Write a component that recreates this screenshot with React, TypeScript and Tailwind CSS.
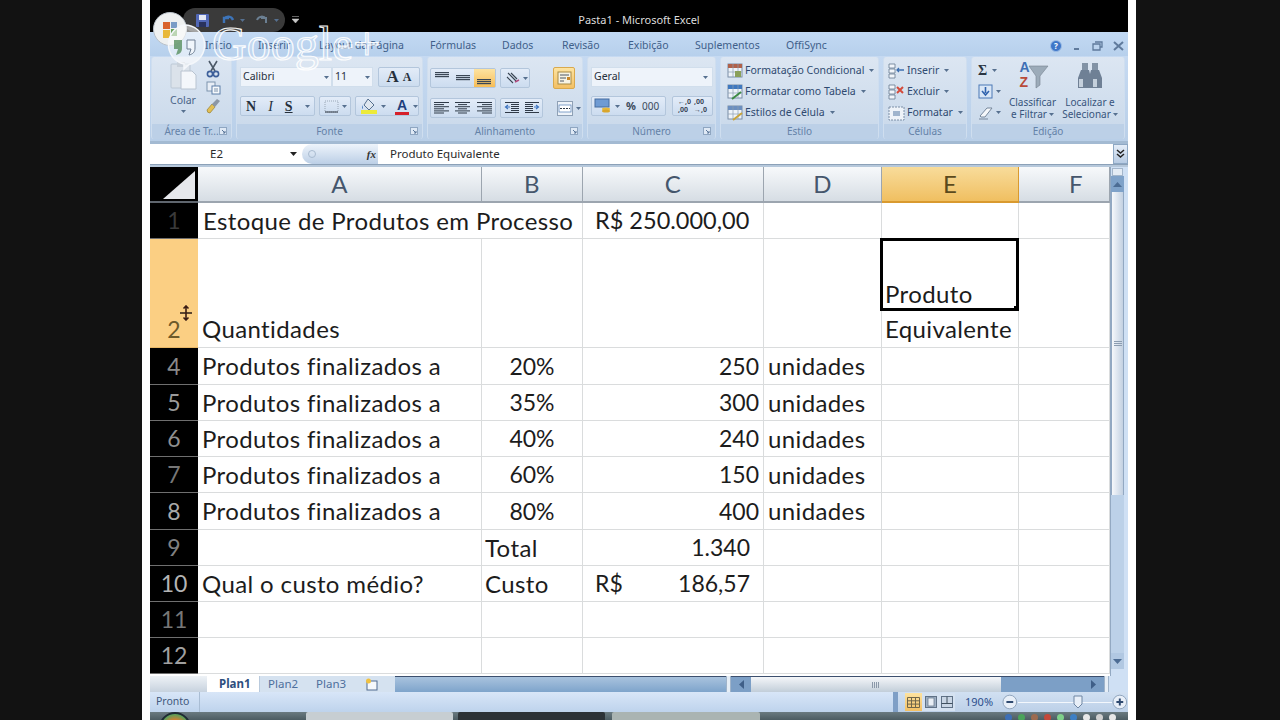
import type { ReactNode } from "react";

const ui = "font-['Noto_Sans',sans-serif]";
const cellFont = "font-['Lato',sans-serif]";

const tabs: [string, string][] = [
  ["Início", "w-[53px]"],
  ["Inserir", "w-[61px]"],
  ["Layout da Página", "w-[111px]"],
  ["Fórmulas", "w-[72px]"],
  ["Dados", "w-[60px]"],
  ["Revisão", "w-[66px]"],
  ["Exibição", "w-[67px]"],
  ["Suplementos", "w-[91px]"],
  ["OffiSync", "w-[60px]"],
];

function Caret({ className = "" }: { className?: string }) {
  return (
    <svg width="5" height="3" viewBox="0 0 5 3" className={className}>
      <path d="M0 0h5L2.5 3z" fill="#56708f" />
    </svg>
  );
}

function Launcher() {
  return (
    <svg width="8" height="8" viewBox="0 0 8 8" className="absolute right-[4px] top-[3px]">
      <rect x="0.5" y="0.5" width="7" height="7" fill="#dfe9f5" stroke="#8fa6c1" />
      <path d="M3 3l3 3M6 4v2H4" stroke="#5a7699" fill="none" />
    </svg>
  );
}

function Group({ w, label, launcher, children }: { w: string; label: string; launcher?: boolean; children: ReactNode }) {
  return (
    <div className={`${w} h-[82px] flex flex-col rounded-[3px] overflow-hidden bg-gradient-to-b from-[#dce6f2] to-[#c8d8ea] border-x border-[#cfdeef]`}>
      <div className="flex-1 min-h-0">{children}</div>
      <div className={`relative h-[15px] bg-[#bcd0e7] text-center text-[10px] leading-[15px] text-[#6482a8] ${ui}`}>
        {label}
        {launcher && <Launcher />}
      </div>
    </div>
  );
}

function BtnGroup({ className = "", children }: { className?: string; children: ReactNode }) {
  return (
    <div className={`h-5 flex items-center rounded-[2px] border border-[#b3c6dc] bg-gradient-to-b from-[#e3ecf8] to-[#ccdcef] ${className}`}>
      {children}
    </div>
  );
}

function Lines({ rows }: { rows: [number, number][] }) {
  return (
    <svg width="15" height="14" viewBox="0 0 15 14">
      {rows.map(([x, w], i) => (
        <rect key={i} x={x} y={1 + i * 2.1} width={w} height="1" fill="#2f3a48" />
      ))}
    </svg>
  );
}

function VAlign({ y }: { y: number }) {
  return (
    <svg width="16" height="14" viewBox="0 0 16 14">
      {[0, 2, 4].map((d) => (
        <rect key={d} x="1" y={y + d} width="14" height="1.2" fill="#3a4654" />
      ))}
    </svg>
  );
}

function IndentIcon({ flip }: { flip?: boolean }) {
  return (
    <svg width="16" height="14" viewBox="0 0 16 14" className={flip ? "-scale-x-100" : ""}>
      {[1, 3, 5, 7, 9, 11].map((y) => (
        <rect key={y} x={y === 1 || y === 11 ? 1 : 7} y={y} width={y === 1 || y === 11 ? 14 : 8} height="1" fill="#303a48" />
      ))}
      <path d="M6 6H2M4 4L1.5 6 4 8" stroke="#3f75c0" strokeWidth="1.2" fill="none" />
    </svg>
  );
}

function Scissors() {
  return (
    <svg width="14" height="18" viewBox="0 0 14 18">
      <path d="M3 1l6 10M11 1L5 11" stroke="#4d5a69" strokeWidth="1.6" />
      <circle cx="4" cy="14" r="2.6" fill="none" stroke="#3c5f9a" strokeWidth="1.6" />
      <circle cx="10" cy="14" r="2.6" fill="none" stroke="#3c5f9a" strokeWidth="1.6" />
    </svg>
  );
}

function CopyIcon() {
  return (
    <svg width="15" height="14" viewBox="0 0 15 14">
      <rect x="1" y="1" width="8" height="9" fill="#e8eef6" stroke="#7d93ad" />
      <rect x="6" y="5" width="8" height="8" fill="#f6f9fc" stroke="#5d7ea8" />
      <path d="M8 8h4M8 10h4" stroke="#7d93ad" />
    </svg>
  );
}

function BrushIcon() {
  return (
    <svg width="16" height="16" viewBox="0 0 16 16">
      <path d="M2 12l5-6 3 3-5 6q-3 0-3-3z" fill="#e2bf55" stroke="#8b7327" strokeWidth="0.6" />
      <path d="M7 6l5-5 3 2-5 6z" fill="#8b97a6" />
    </svg>
  );
}

function StyleIcon({ tone }: { tone: "cond" | "table" | "cell" }) {
  const fill = tone === "cond" ? "#b0614a" : tone === "table" ? "#3f78bf" : "#6c8fbf";
  return (
    <svg width="16" height="16" viewBox="0 0 16 16">
      <rect x="1" y="1" width="14" height="13" fill="#eef3f9" stroke="#7b8ea6" />
      <rect x="1" y="1" width="14" height="4" fill={fill} />
      <path d="M1 9h14M6 1v13M11 1v13" stroke="#8b9db3" strokeWidth="0.7" />
      {tone === "cell" && <path d="M6 15L15 8" stroke="#c9a43a" strokeWidth="2" />}
      {tone === "cond" && <rect x="8" y="8" width="6" height="6" fill="#8aa05a" />}
      {tone === "table" && <path d="M5 15l9-7" stroke="#3e8b45" strokeWidth="2" />}
    </svg>
  );
}

function CellOp({ tone }: { tone: "ins" | "del" | "fmt" }) {
  return (
    <svg width="17" height="16" viewBox="0 0 17 16">
      {tone === "fmt" ? (
        <>
          <rect x="1" y="2" width="15" height="13" fill="#eef3f9" stroke="#7b8ea6" strokeDasharray="2 1" />
          <rect x="5" y="6" width="7" height="5" fill="#9fb4cd" />
        </>
      ) : (
        <>
          <path d="M1 1h6v4H1zM1 6h6v4H1zM1 11h6v4H1z" fill="#f2f6fb" stroke="#65788f" strokeWidth="0.8" />
          {tone === "ins" ? (
            <path d="M9 7h7M11 5L9 7l2 2" stroke="#3d6fb0" strokeWidth="1.3" fill="none" />
          ) : (
            <path d="M9 3l6 6M15 3l-6 6" stroke="#d44a3a" strokeWidth="2" />
          )}
        </>
      )}
    </svg>
  );
}

function StyleRow({ icon, label }: { icon: ReactNode; label: string }) {
  return (
    <div className={`h-[21px] flex items-center gap-[2px] text-[10.5px] text-[#2f4a70] ${ui}`}>
      {icon}
      <span>{label}</span>
      <Caret className="ml-[3px]" />
    </div>
  );
}

function Ribbon() {
  return (
    <div className="h-[85px] pt-px pl-px flex gap-1 bg-gradient-to-b from-[#c6daf2] to-[#b9cfe8]">
      <Group w="w-[81px]" label="Área de Tr..." launcher>
        <div className="h-full flex">
          <div className={`w-[50px] flex flex-col items-center pl-[12px] pt-[4px] text-[10.5px] text-[#4a6488] ${ui}`}>
            <svg width="30" height="29" viewBox="0 0 30 29" className="shrink-0">
              <rect x="3" y="3" width="19" height="24" rx="1" fill="#dbe2ea" stroke="#bcc8d5" />
              <rect x="9" y="1" width="8" height="5" fill="#c9d1da" />
              <path d="M13 10h11l4 4v14H13z" fill="#f4f7fb" stroke="#b9c4d1" />
            </svg>
            <span className="mt-[3px] leading-[14px]">Colar</span>
            <Caret className="mt-[3px]" />
          </div>
          <div className="flex flex-col items-center gap-[3px] pt-[3px] pl-[3px]">
            <Scissors />
            <CopyIcon />
            <BrushIcon />
          </div>
        </div>
      </Group>

      <Group w="w-[187px]" label="Fonte" launcher>
        <div className={`pl-[3px] pt-[10px] flex flex-col gap-[9px] text-[10.5px] text-[#26303c] ${ui}`}>
          <div className="flex items-center h-5">
            <div className="w-[92px] h-5 flex items-center justify-between px-[2px] bg-[#eef3fa] border border-[#d1deec]">
              Calibri
              <Caret />
            </div>
            <div className="w-[41px] h-5 flex items-center justify-between px-[2px] mr-[5px] bg-[#eef3fa] border border-[#d1deec]">
              11
              <Caret />
            </div>
            <BtnGroup className="w-[42px] justify-center gap-[4px] font-['Liberation_Serif',serif] font-bold">
              <span className="text-[17px] leading-[18px]">A</span>
              <span className="text-[12px] leading-[18px]">A</span>
            </BtnGroup>
          </div>
          <div className="flex items-center gap-[4px]">
            <BtnGroup className="w-[75px] gap-[12px] pl-[5px] font-['Liberation_Serif',serif] text-[14px]">
              <span className="font-bold">N</span>
              <span className="italic">I</span>
              <span className="font-bold underline">S</span>
              <Caret />
            </BtnGroup>
            <BtnGroup className="w-[32px] gap-[3px] pl-[4px]">
              <svg width="15" height="13" viewBox="0 0 15 13">
                <rect x="1" y="1" width="13" height="11" fill="none" stroke="#9aa7b6" strokeDasharray="1 1" />
                <path d="M1 12h13" stroke="#2c3440" />
              </svg>
              <Caret />
            </BtnGroup>
            <BtnGroup className="w-[64px] gap-[3px] pl-[4px]">
              <svg width="18" height="16" viewBox="0 0 18 16">
                <path d="M8 1l6 6-5 5-5-5z" fill="#dfe7f0" stroke="#56708f" />
                <path d="M3 7q-2 3 0 4" fill="#5082c4" />
                <rect x="1" y="12" width="16" height="4" fill="#ecea3a" />
              </svg>
              <Caret />
              <span className="relative w-[14px] ml-[6px] text-center font-['Liberation_Sans',sans-serif] font-bold text-[14px] leading-[14px] text-[#1f3f7d] border-b-[3px] border-[#d6202a]">A</span>
              <Caret className="ml-[1px]" />
            </BtnGroup>
          </div>
        </div>
      </Group>

      <Group w="w-[156px]" label="Alinhamento" launcher>
        <div className="pl-[2px] pt-[10px] flex flex-col gap-[9px]">
          <div className="flex items-center gap-[4px]">
            <BtnGroup className="w-[66px]">
              <span className="w-[22px] flex justify-center"><VAlign y={1} /></span>
              <span className="w-[22px] flex justify-center"><VAlign y={4} /></span>
              <span className="w-[22px] h-[18px] flex justify-center items-center bg-gradient-to-b from-[#fde3a0] to-[#f6bd56]"><VAlign y={8} /></span>
            </BtnGroup>
            <BtnGroup className="w-[30px] pl-[5px] gap-[2px]">
              <svg width="15" height="13" viewBox="0 0 15 13">
                <path d="M2 1l8 8M1 5l6 6M5 1l6 6" stroke="#3a4654" strokeWidth="1.1" />
                <path d="M9 10l4-2" stroke="#b14a7d" strokeWidth="1.4" />
              </svg>
              <Caret />
            </BtnGroup>
            <div className="w-[22px] h-[22px] ml-[19px] flex items-center justify-center rounded-[2px] border border-[#d9a94e] bg-gradient-to-b from-[#fde3a0] to-[#f3c064]">
              <svg width="15" height="14" viewBox="0 0 15 14">
                <rect x="1" y="1" width="13" height="12" fill="#f7f3e4" stroke="#a78a45" />
                <path d="M3 4h9M3 7h6M3 10h4" stroke="#4b5563" />
                <rect x="10" y="6" width="3" height="3" fill="#c8872b" />
              </svg>
            </div>
          </div>
          <div className="flex items-center gap-[4px]">
            <BtnGroup className="w-[66px]">
              <span className="w-[22px] flex justify-center"><Lines rows={[[0, 15], [0, 10], [0, 15], [0, 10], [0, 15], [0, 10]]} /></span>
              <span className="w-[22px] flex justify-center"><Lines rows={[[0, 15], [3, 9], [0, 15], [3, 9], [0, 15], [3, 9]]} /></span>
              <span className="w-[22px] flex justify-center"><Lines rows={[[0, 15], [5, 10], [0, 15], [5, 10], [0, 15], [5, 10]]} /></span>
            </BtnGroup>
            <BtnGroup className="w-[43px] justify-center gap-[4px]">
              <IndentIcon />
              <IndentIcon flip />
            </BtnGroup>
            <div className="h-5 ml-[10px] flex items-center gap-[3px]">
              <svg width="16" height="15" viewBox="0 0 16 15">
                <rect x="0.5" y="0.5" width="15" height="14" fill="#eef3f9" stroke="#8ea0b5" />
                <rect x="2" y="4" width="12" height="7" fill="#fff" stroke="#4f7cb5" strokeWidth="0.7" />
                <path d="M3 7.5h10" stroke="#2f3a48" strokeDasharray="2 1" />
              </svg>
              <Caret />
            </div>
          </div>
        </div>
      </Group>

      <Group w="w-[129px]" label="Número" launcher>
        <div className={`pl-[3px] pt-[10px] flex flex-col gap-[9px] text-[10.5px] text-[#26303c] ${ui}`}>
          <div className="w-[122px] h-5 flex items-center justify-between px-[2px] pr-[4px] bg-[#eef3fa] border border-[#d1deec]">
            Geral
            <Caret />
          </div>
          <div className="flex gap-[6px]">
            <BtnGroup className="w-[75px] pl-[2px]">
              <svg width="18" height="16" viewBox="0 0 18 16">
                <rect x="1" y="1" width="14" height="8" fill="#6f9bd3" stroke="#466c9f" />
                <ellipse cx="12" cy="11" rx="4" ry="1.5" fill="#e6b93d" />
                <ellipse cx="12" cy="13" rx="4" ry="1.5" fill="#d9a62c" />
              </svg>
              <Caret className="ml-[3px]" />
              <span className="ml-[6px] font-bold text-[11px] text-[#3c4a5c]">%</span>
              <span className="ml-[6px] text-[10px] text-[#3c4a5c]">000</span>
            </BtnGroup>
            <BtnGroup className="w-[41px] justify-center gap-[3px] text-[7px] leading-[8px] font-bold text-[#3c4a5c]">
              <span className="whitespace-pre">{"←,0\n,00"}</span>
              <span className="whitespace-pre">{",00\n→,0"}</span>
            </BtnGroup>
          </div>
        </div>
      </Group>

      <Group w="w-[159px]" label="Estilo">
        <div className="pl-[6px] pt-[3px]">
          <StyleRow icon={<StyleIcon tone="cond" />} label="Formatação Condicional" />
          <StyleRow icon={<StyleIcon tone="table" />} label="Formatar como Tabela" />
          <StyleRow icon={<StyleIcon tone="cell" />} label="Estilos de Célula" />
        </div>
      </Group>

      <Group w="w-[84px]" label="Células">
        <div className="pl-[4px] pt-[3px]">
          <StyleRow icon={<CellOp tone="ins" />} label="Inserir" />
          <StyleRow icon={<CellOp tone="del" />} label="Excluir" />
          <StyleRow icon={<CellOp tone="fmt" />} label="Formatar" />
        </div>
      </Group>

      <Group w="w-[154px]" label="Edição">
        <div className="h-full flex">
          <div className="w-[32px] pl-[6px] pt-[3px] flex flex-col">
            <div className="h-[21px] flex items-center gap-[5px] font-['Liberation_Serif',serif] font-bold text-[14px] text-[#2a3442]">
              Σ
              <Caret />
            </div>
            <div className="h-[21px] flex items-center gap-[3px]">
              <svg width="15" height="15" viewBox="0 0 15 15">
                <rect x="1" y="1" width="13" height="13" fill="#d9e6f6" stroke="#4b78b5" />
                <path d="M7.5 3v6M4 7l3.5 4L11 7" stroke="#2f62ad" strokeWidth="1.6" fill="none" />
              </svg>
              <Caret />
            </div>
            <div className="h-[21px] flex items-center gap-[3px]">
              <svg width="15" height="14" viewBox="0 0 15 14">
                <path d="M2 10l7-8h5L7 11H3z" fill="#f5f7fa" stroke="#76879b" />
                <path d="M1 13h9" stroke="#76879b" />
              </svg>
              <Caret />
            </div>
          </div>
          <div className={`w-[57px] flex flex-col items-center pt-[4px] text-[10px] leading-[12px] text-[#38557c] ${ui}`}>
            <div className="relative w-[32px] h-[30px]">
              <svg width="32" height="30" viewBox="0 0 32 30">
                <path d="M12 5h19l-8 10v9l-4 3V15z" fill="#9cabb9" stroke="#75828f" strokeWidth="0.6" />
              </svg>
              <span className="absolute left-[3px] -top-[2px] font-['Liberation_Sans',sans-serif] font-bold text-[14px] leading-[16px] text-[#3d6fb5]">A</span>
              <span className="absolute left-[3px] top-[13px] font-['Liberation_Sans',sans-serif] font-bold text-[14px] leading-[16px] text-[#b84a3a]">Z</span>
            </div>
            <span className="mt-[5px]">Classificar</span>
            <span className="flex items-center gap-[2px]">e Filtrar <Caret /></span>
          </div>
          <div className={`w-[58px] flex flex-col items-center pt-[4px] text-[10px] leading-[12px] text-[#38557c] ${ui}`}>
            <svg width="28" height="30" viewBox="0 0 28 30" className="shrink-0">
              <rect x="6" y="2" width="6" height="8" fill="#8293a6" />
              <rect x="16" y="2" width="6" height="8" fill="#8293a6" />
              <path d="M5 9h8l1 4h0v14H2V17z" fill="#6f8095" />
              <path d="M23 9h-8l-1 4v14h12V17z" fill="#6f8095" />
              <rect x="3" y="18" width="4" height="8" fill="#c5d0dc" />
              <rect x="17" y="18" width="4" height="8" fill="#c5d0dc" />
            </svg>
            <span className="mt-[5px]">Localizar e</span>
            <span className="flex items-center gap-[2px]">Selecionar <Caret /></span>
          </div>
        </div>
      </Group>
    </div>
  );
}

function FormulaBar() {
  return (
    <div className={`h-5 flex items-center bg-white text-[11.5px] text-[#2a2a2a] ${ui}`}>
      <div className="w-[147px] h-full flex items-center pl-[60px] justify-between">
        E2
        <svg width="7" height="4" viewBox="0 0 7 4">
          <path d="M0 0h7L3.5 4z" fill="#222" />
        </svg>
      </div>
      <div className="w-[76px] h-full ml-[5px] flex items-center justify-between pl-[6px] pr-[2px] rounded-l-full bg-gradient-to-b from-[#eef4fb] to-[#bccfe6]">
        <span className="w-[8px] h-[8px] rounded-full border border-[#a9bbd0]" />
        <span className="font-['Liberation_Serif',serif] italic font-bold text-[11px] text-[#333]">fx</span>
      </div>
      <div className="flex-1 pl-[12px]">Produto Equivalente</div>
      <div className="w-[15px] h-full flex items-center justify-center bg-gradient-to-b from-[#e4edf8] to-[#b7cbe3] border border-[#8ea8c4]">
        <svg width="9" height="10" viewBox="0 0 9 10">
          <path d="M1 1l3.5 3L8 1M1 5l3.5 3L8 5" stroke="#222" strokeWidth="1.5" fill="none" />
        </svg>
      </div>
    </div>
  );
}

type Align = "left" | "right" | "center";

const num = "text-[23px] tracking-normal";

const rows: { n: string; tone: string; h: string; cells: [string, Align, string?][] }[] = [
  { n: "1", tone: "text-[#3a3a3a]", h: "h-[36px]", cells: [] },
  { n: "4", tone: "text-[#8a8a8a]", h: "h-[37px]", cells: [["Produtos finalizados a", "left"], ["20%", "center", num], ["250", "right", `pr-[4px] ${num}`], ["unidades", "left"]] },
  { n: "5", tone: "text-[#9a9a9a]", h: "h-[36px]", cells: [["Produtos finalizados a", "left"], ["35%", "center", num], ["300", "right", `pr-[4px] ${num}`], ["unidades", "left"]] },
  { n: "6", tone: "text-[#8f8f8f]", h: "h-[36px]", cells: [["Produtos finalizados a", "left"], ["40%", "center", num], ["240", "right", `pr-[4px] ${num}`], ["unidades", "left"]] },
  { n: "7", tone: "text-[#777]", h: "h-[36px]", cells: [["Produtos finalizados a", "left"], ["60%", "center", num], ["150", "right", `pr-[4px] ${num}`], ["unidades", "left"]] },
  { n: "8", tone: "text-[#a8a8a8]", h: "h-[37px]", cells: [["Produtos finalizados a", "left"], ["80%", "center", num], ["400", "right", `pr-[4px] ${num}`], ["unidades", "left"]] },
  { n: "9", tone: "text-[#808080]", h: "h-[36px]", cells: [["", "left"], ["Total", "left"], ["1.340", "right", `pr-[13px] ${num}`], ["", "left"]] },
  { n: "10", tone: "text-[#b4b4b4]", h: "h-[36px]", cells: [["Qual o custo médio?", "left"], ["Custo", "left"], ["186,57", "right", `pr-[13px] ${num}`], ["", "left"]] },
  { n: "11", tone: "text-[#777]", h: "h-[36px]", cells: [] },
  { n: "12", tone: "text-[#a0a0a0]", h: "h-[36px]", cells: [] },
];

const colW = ["w-[284px]", "w-[101px]", "w-[181px]", "w-[118px]", "w-[137px]", "w-[91px]"];

function Cell({ w, children, className = "" }: { w: string; children?: ReactNode; className?: string }) {
  return <div className={`${w} shrink-0 h-full flex items-center border-r border-b border-[#dadcdd] text-[#1c1c1c] ${className}`}>{children}</div>;
}

function RowHead({ n, tone, h }: { n: string; tone: string; h: string }) {
  return (
    <div className={`${h} w-[48px] shrink-0 flex items-center justify-center bg-black border-b border-[#6f6f6f] text-[23px] tracking-normal ${tone}`}>{n}</div>
  );
}

function Row({ r }: { r: (typeof rows)[number] }) {
  return (
    <div className={`${r.h} flex`}>
      <RowHead n={r.n} tone={r.tone} h={r.h} />
      {colW.map((w, i) => {
        const c = r.cells[i];
        const al = !c ? "" : c[1] === "right" ? "justify-end" : c[1] === "center" ? "justify-center" : i === 1 ? "pl-[3px]" : "pl-[4px]";
        return (
          <Cell key={i} w={w} className={`${al} ${c?.[2] ?? ""}`}>
            {r.n === "10" && i === 2 && <span className="mr-auto pl-[12px]">R$</span>}
            {c?.[0]}
          </Cell>
        );
      })}
    </div>
  );
}

function Sheet() {
  return (
    <div className={`relative w-[960px] h-[509px] overflow-hidden bg-white text-[24px] tracking-[0.38px] leading-none ${cellFont}`}>
      <div className="h-[36px] flex">
        <div className="w-[48px] h-full p-[3px] pb-[2px] bg-black border-b-2 border-[#5f666e] flex items-end justify-end">
          <svg width="32" height="28" viewBox="0 0 32 28">
            <path d="M32 0v28H0z" fill="#e6e8ec" />
          </svg>
        </div>
        {["A", "B", "C", "D", "E", "F"].map((l, i) => (
          <div
            key={l}
            className={`${colW[i]} h-full flex items-center justify-center border-r border-b-2 ${l === "F" ? "pl-[24px]" : ""} ${
              l === "E"
                ? "bg-gradient-to-b from-[#f8dc9a] to-[#f0bf60] border-[#d99a2f] text-[#5b4a1c]"
                : "bg-gradient-to-b from-[#f7f9fb] to-[#d6dde4] border-[#9ca5af] text-[#45566c]"
            }`}
          >
            {l}
          </div>
        ))}
      </div>

      <Row r={rows[0]} />

      <div className="h-[109px] flex">
        <div className="h-full w-[48px] shrink-0 flex items-end justify-center pb-[6px] bg-[#fbcf83] border-b border-[#e8b765] text-[23px] text-[#6d5a2a]">2</div>
        <Cell w={colW[0]} className="items-end pb-[6px] pl-[4px]">Quantidades</Cell>
        <Cell w={colW[1]} />
        <Cell w={colW[2]} />
        <Cell w={colW[3]} />
        <Cell w={colW[4]} className="relative flex-col !items-start justify-end pb-[6px] pl-[3px]">
          <span className="mb-[11px]">Produto</span>
          <span>Equivalente</span>
          <div className="absolute -left-[2px] -top-px w-[139px] h-[73px] border-[3px] border-black">
            <span className="absolute -right-[3px] -bottom-[3px] w-[5px] h-[5px] bg-black" />
          </div>
        </Cell>
        <Cell w={colW[5]} />
      </div>

      {rows.slice(1).map((r) => (
        <Row key={r.n} r={r} />
      ))}

      {/* textos que transbordam da coluna A e o valor da linha 1 */}
      <div className="absolute left-[48px] top-[36px] w-[384px] h-[35px] flex items-center pl-[5px] bg-white text-[#1c1c1c]">
        Estoque de Produtos em Processo
      </div>
      <div className="absolute left-[445px] top-[36px] h-[35px] flex items-center text-[23.5px] tracking-normal text-[#1c1c1c]">R$ 250.000,00</div>
    </div>
  );
}

function VScroll() {
  return (
    <div className="w-[18px] h-[509px] flex flex-col pr-[4px] bg-[#cfe0f4] border-l border-[#93a9c2]">
      <div className="h-[8px] mt-[1px] mx-px bg-[#e4ecf5] border border-[#a4b6cb]" />
      <div className="h-[16px] flex items-center justify-center bg-[#7fa2c9]">
        <svg width="9" height="5" viewBox="0 0 9 5">
          <path d="M4.5 0L9 5H0z" fill="#4c6c94" />
        </svg>
      </div>
      <div className="h-[303px] flex items-center justify-center bg-gradient-to-r from-[#f6f8fb] to-[#c3d1e2] border-x border-[#92a8c2]">
        <svg width="8" height="6" viewBox="0 0 8 6">
          <path d="M0 .5h8M0 2.5h8M0 4.5h8" stroke="#8c9db1" />
        </svg>
      </div>
      <div className="flex-1 bg-[#bcd1e8]" />
      <div className="h-[16px] mb-[7px] flex items-center justify-center bg-[#b1c8e2]">
        <svg width="9" height="5" viewBox="0 0 9 5">
          <path d="M4.5 5L9 0H0z" fill="#4c6c94" />
        </svg>
      </div>
    </div>
  );
}

function SheetTabs() {
  return (
    <div className={`h-4 flex bg-[#cfe0f4] text-[11.5px] leading-4 ${ui}`}>
      <div className="w-[57px] h-full bg-gradient-to-b from-[#eef2f6] to-[#c7d2de]" />
      <div className="w-[52px] h-full pl-[12px] bg-white font-bold text-[#2e4f7e]">Plan1</div>
      <div className="w-[48px] h-full pl-[8px] bg-[#d5e2f0] text-[#4d6f9c] border-l border-[#b9cadd]">Plan2</div>
      <div className="w-[48px] h-full pl-[9px] bg-[#d5e2f0] text-[#4d6f9c]">Plan3</div>
      <div className="w-[40px] h-full flex pl-[10px] items-center bg-[#d5e2f0]">
        <svg width="14" height="13" viewBox="0 0 14 13">
          <rect x="2" y="3" width="10" height="9" fill="#f5f8fc" stroke="#506b90" />
          <circle cx="3.5" cy="3" r="2.5" fill="#f1c13f" />
        </svg>
      </div>
      <div className="w-[331px] h-full border-t border-[#3c4f6e] bg-gradient-to-b from-[#a9c3de] to-[#7ea4cb]" />
      <div className="w-[5px] h-full bg-[#e6eef6] border-x border-[#a0b4ca]" />
      <div className="w-[20px] h-full flex items-center justify-center bg-[#7c9fc6] border-t border-[#3c4f6e]">
        <svg width="5" height="9" viewBox="0 0 5 9">
          <path d="M0 4.5L5 0v9z" fill="#3f5f88" />
        </svg>
      </div>
      <div className="w-[250px] h-full flex items-center justify-center border-t border-[#3c4f6e] bg-gradient-to-b from-[#f4f6f9] to-[#c2ced9]">
        <svg width="8" height="6" viewBox="0 0 8 6">
          <path d="M.5 0v6M2.5 0v6M4.5 0v6M6.5 0v6" stroke="#8a98a8" />
        </svg>
      </div>
      <div className="w-[103px] h-full flex items-center justify-end pr-[8px] bg-[#7c9fc6] border-t border-[#3c4f6e]">
        <svg width="5" height="9" viewBox="0 0 5 9">
          <path d="M5 4.5L0 0v9z" fill="#3f5f88" />
        </svg>
      </div>
      <div className="w-[5px] h-full bg-[#e6eef6] border-x border-[#a0b4ca]" />
    </div>
  );
}

function StatusBar() {
  return (
    <div className={`h-5 flex items-center bg-gradient-to-b from-[#d8e6f8] to-[#bed3ec] text-[10.5px] text-[#3f587c] ${ui}`}>
      <div className="w-[50px] h-full flex items-center pl-[6px] border-r border-[#a9bdd4]">Pronto</div>
      <div className="w-[693px] h-full" />
      <div className="w-[235px] h-full flex items-center pl-[7px] bg-gradient-to-b from-[#d1e0f2] to-[#bcd0e8] border-l-[5px] border-[#7f9fc6]">
        <div className="w-[50px] h-[18px] flex items-center bg-[#d5e2f1]">
          <span className="w-[17px] h-full flex items-center justify-center bg-gradient-to-b from-[#fde3a0] to-[#f3c064]">
            <svg width="13" height="11" viewBox="0 0 13 11">
              <path d="M.5.5h12v10H.5zM.5 3.8h12M.5 7.1h12M4.5.5v10M8.5.5v10" fill="none" stroke="#70664a" />
            </svg>
          </span>
          <span className="w-[17px] flex justify-center">
            <svg width="12" height="12" viewBox="0 0 12 12">
              <rect x=".5" y=".5" width="11" height="11" fill="#9fb0c4" stroke="#5f7186" />
              <rect x="3" y="2" width="6" height="8" fill="#e8eef5" stroke="#5f7186" strokeWidth=".7" />
            </svg>
          </span>
          <span className="w-[16px] flex justify-center">
            <svg width="12" height="12" viewBox="0 0 12 12">
              <rect x=".5" y=".5" width="11" height="11" fill="#c9d6e5" stroke="#5f7186" />
              <path d="M6 .5v7M.5 7.5h11" stroke="#40505f" />
            </svg>
          </span>
        </div>
        <span className="ml-[10px] w-[32px] text-[#2c4f8c] text-[11px]">190%</span>
        <svg width="16" height="16" viewBox="0 0 16 16" className="ml-[6px]">
          <circle cx="8" cy="8" r="7" fill="#e8eff8" stroke="#8fa3bb" />
          <path d="M4.5 8h7" stroke="#2f4a70" strokeWidth="2" />
        </svg>
        <div className="relative w-[97px] h-px bg-[#f3f7fc]">
          <svg width="10" height="14" viewBox="0 0 10 14" className="absolute left-[55px] -top-[7px]">
            <path d="M1 1h8v8l-4 4-4-4z" fill="#e8eff8" stroke="#6f86a3" />
          </svg>
        </div>
        <svg width="16" height="16" viewBox="0 0 16 16">
          <circle cx="8" cy="8" r="7" fill="#e8eff8" stroke="#8fa3bb" />
          <path d="M4.5 8h7M8 4.5v7" stroke="#2f4a70" strokeWidth="2" />
        </svg>
      </div>
    </div>
  );
}

function Taskbar() {
  return (
    <div className="h-2 flex bg-gradient-to-b from-[#6a7a80] to-[#4c5c62] overflow-hidden">
      <div className="w-[156px] pl-[9px]">
        <div className="w-[32px] h-[32px] rounded-full border-2 border-[#1f2b34] bg-[radial-gradient(circle,#e8792b_35%,#57a05a_70%)]" />
      </div>
      <div className="w-[147px] h-full rounded-t-[2px] bg-[#c7ced2]" />
      <div className="w-[147px] ml-[5px] h-full rounded-t-[2px] bg-[#2c3236]" />
      <div className="w-[148px] ml-[7px] h-full rounded-t-[2px] bg-[#aab4b2]" />
      <div className="ml-auto mr-[12px] flex gap-[6px] pt-[2px]">
        {["#3d6fb5", "#4aa35a", "#9c6b50", "#c4483a", "#7fd08a", "#3d7fc4", "#e8e8e8", "#d0d0d0", "#e8e8e8"].map((c, i) => (
          <span key={i} className="w-[7px] h-[7px] rounded-full" style={{ background: c }} />
        ))}
      </div>
    </div>
  );
}

function TitleBar() {
  return (
    <div className={`h-8 pt-2 grid grid-cols-[1fr_auto_1fr] items-center bg-black text-[11px] text-[#dcdcdc] ${ui}`}>
      <div className="flex items-center pl-[33px]">
        <div className="w-[102px] h-6 flex items-center gap-[5px] pl-[13px] rounded-full bg-[#3a3a3a]">
          <svg width="13" height="13" viewBox="0 0 13 13">
            <rect width="13" height="13" rx="1" fill="#5167b5" />
            <rect x="3" y="1" width="7" height="5" fill="#e3e7f3" />
            <rect x="3" y="8" width="7" height="5" fill="#29325d" />
          </svg>
          <svg width="14" height="12" viewBox="0 0 14 12" className="ml-[7px] -scale-x-100">
            <path d="M2 6a5 5 0 0 1 9-1M11 9V4H6" stroke="#3d74b8" strokeWidth="2.4" fill="none" />
          </svg>
          <Caret />
          <svg width="14" height="12" viewBox="0 0 14 12" className="ml-[5px]">
            <path d="M2 6a5 5 0 0 1 9-1M11 9V4H6" stroke="#6b7f92" strokeWidth="2" fill="none" />
          </svg>
          <Caret />
        </div>
        <svg width="7" height="8" viewBox="0 0 7 8" className="ml-[7px]">
          <path d="M0 .5h7M0 3h7L3.5 7z" fill="#c8c8c8" stroke="#c8c8c8" strokeWidth=".5" />
        </svg>
      </div>
      <div className="text-center">Pasta1 - Microsoft Excel</div>
      <div />
    </div>
  );
}

function TabRow() {
  return (
    <div className={`h-6 pt-[3px] flex items-center pl-[55px] bg-gradient-to-b from-[#c2d9f3] to-[#b7d0ec] text-[10.5px] text-[#3f5f8a] ${ui}`}>
      {tabs.map(([t, w]) => (
        <div key={t} className={`${w} shrink-0 whitespace-nowrap`}>{t}</div>
      ))}
      <div className="ml-auto pr-[4px] flex items-center gap-[10px]">
        <span className="w-[12px] h-[12px] flex items-center justify-center rounded-full bg-[#3d76c8] border border-[#9dbde6] text-[8px] font-bold text-white">?</span>
        <svg width="10" height="10" viewBox="0 0 10 10">
          <path d="M2 8h5" stroke="#5f7a9c" strokeWidth="2" />
        </svg>
        <svg width="11" height="10" viewBox="0 0 11 10">
          <path d="M3 1h7v5H8M1 3h7v6H1z" fill="none" stroke="#5f7a9c" strokeWidth="1.3" />
        </svg>
        <svg width="11" height="10" viewBox="0 0 11 10">
          <path d="M1 1l9 8M10 1L1 9" stroke="#5f7a9c" strokeWidth="2" />
        </svg>
      </div>
    </div>
  );
}

function Overlays() {
  return (
    <>
      {/* botão Office */}
      <svg width="34" height="34" viewBox="0 0 34 34" className="absolute left-[3px] top-[12px]">
        <circle cx="17" cy="17" r="16.5" fill="#eef0f0" stroke="#b9c1c9" />
        <rect x="10" y="10" width="7" height="7" fill="#d9622b" />
        <rect x="18" y="10" width="6" height="6" fill="#7a9cc6" />
        <rect x="10" y="18" width="7" height="8" fill="#e8b83a" />
        <rect x="18" y="17" width="6" height="7" fill="#6aa35a" />
      </svg>
      {/* balão do Hangouts */}
      <svg width="46" height="50" viewBox="0 0 46 50" className="absolute left-[11px] top-[23px]">
        <path d="M23 2a20 20 0 0 1 5 39.5L23 46v-5A20 20 0 0 1 23 2z" fill="#ffffff" fillOpacity=".55" stroke="#f4f7fb" strokeWidth="1.5" />
        <path d="M13 17h8v8c0 4-2 6-6 7l2-6h-4z" fill="#4f8a55" fillOpacity=".75" />
        <path d="M26 17h8v8c0 4-2 6-6 7l2-6h-4z" fill="#ffffff" fillOpacity=".5" stroke="#6e7f93" />
      </svg>
      <span className="absolute left-[62px] top-[16px] font-['Liberation_Serif',serif] text-[48px] leading-[56px] text-white/15 [-webkit-text-stroke:1.2px_rgba(255,255,255,0.95)]">
        Google+
      </span>
      {/* cursor de redimensionar */}
      <svg width="14" height="16" viewBox="0 0 14 16" className="absolute left-[29px] top-[305px]">
        <path d="M1 8h12" stroke="#2a1a14" strokeWidth="1.5" />
        <path d="M7 1v14M4.5 3.5L7 1l2.5 2.5M4.5 12.5L7 15l2.5-2.5" stroke="#3a1c14" strokeWidth="1.6" fill="none" />
      </svg>
    </>
  );
}

export default function App() {
  return (
    <div className="w-[1280px] h-[720px] overflow-hidden pl-[142px] bg-[#121212]">
      <div className="relative w-[994px] h-[720px] overflow-hidden border-x-8 border-white">
        <TitleBar />
        <TabRow />
        <Ribbon />
        <div className="h-[3px] bg-[#a3bad2]" />
        <FormulaBar />
        <div className="h-[3px] bg-[#b6c8db] border-t border-[#8ca1b8]" />
        <div className="flex">
          <Sheet />
          <VScroll />
        </div>
        <SheetTabs />
        <StatusBar />
        <Taskbar />
        <Overlays />
      </div>
    </div>
  );
}
